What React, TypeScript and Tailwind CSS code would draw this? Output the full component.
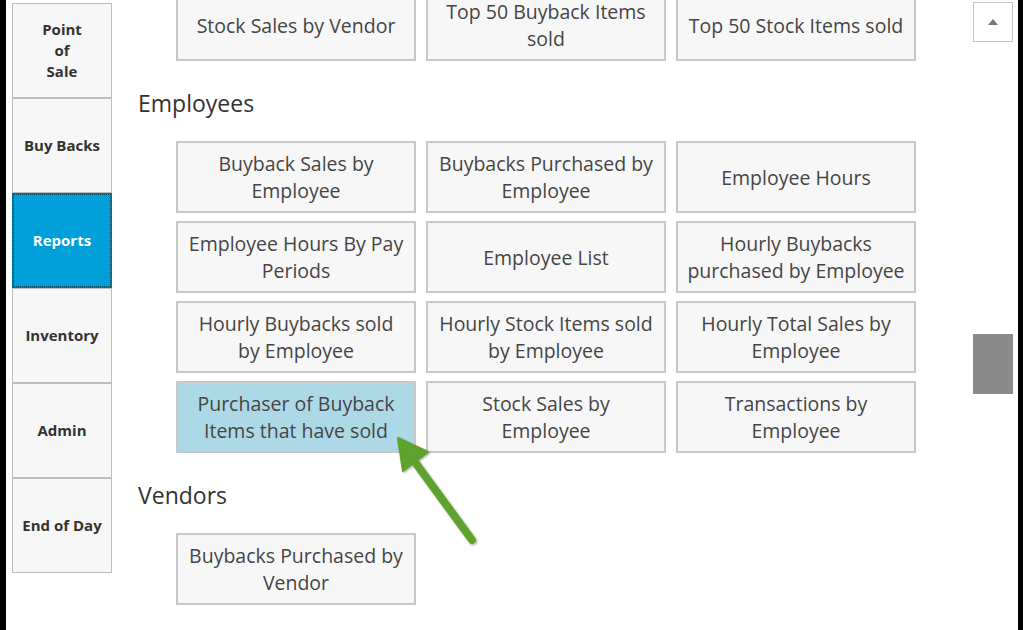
import React from "react";

const navItems = [
  { label: "Point\nof\nSale", active: false },
  { label: "Buy Backs", active: false },
  { label: "Reports", active: true },
  { label: "Inventory", active: false },
  { label: "Admin", active: false },
  { label: "End of Day", active: false },
];

const topRow = ["Stock Sales by Vendor", "Top 50 Buyback Items\nsold", "Top 50 Stock Items sold"];

const employeeReports = [
  "Buyback Sales by\nEmployee",
  "Buybacks Purchased by\nEmployee",
  "Employee Hours",
  "Employee Hours By Pay\nPeriods",
  "Employee List",
  "Hourly Buybacks\npurchased by Employee",
  "Hourly Buybacks sold\nby Employee",
  "Hourly Stock Items sold\nby Employee",
  "Hourly Total Sales by\nEmployee",
  "Purchaser of Buyback\nItems that have sold",
  "Stock Sales by\nEmployee",
  "Transactions by\nEmployee",
];

const vendorReports = ["Buybacks Purchased by\nVendor"];

const ReportButton = ({ label, highlight }: { label: string; highlight?: boolean }) => (
  <button
    className={`h-[72px] w-[240px] border-2 border-[#c8c8c8] px-1 text-[19.5px] leading-[27px] whitespace-pre-line text-[#454545] flex items-center justify-center text-center ${
      highlight ? "bg-[#add8e6]" : "bg-[#f7f7f7]"
    }`}
  >
    {label}
  </button>
);

const ReportGrid = ({ items }: { items: string[] }) => (
  <div className="ml-[38px] grid grid-cols-[240px_240px_240px] gap-x-[10px] gap-y-[8px]">
    {items.map((item) => (
      <ReportButton
        key={item}
        label={item}
        highlight={item.startsWith("Purchaser of Buyback")}
      />
    ))}
  </div>
);

export default function App() {
  return (
    <div
      className="relative flex h-[630px] w-[1023px] overflow-hidden bg-white"
      style={{ fontFamily: '"Open Sans", "Noto Sans", sans-serif' }}
    >
      <div className="w-[6px] shrink-0 bg-black" />

      {/* side nav */}
      <div className="ml-[6px] mt-[3px] flex w-[100px] shrink-0 flex-col">
        {navItems.map((item) => (
          <div
            key={item.label}
            className={`flex h-[95px] items-center justify-center whitespace-pre-line text-center text-[15px] font-bold leading-[21px] ${
              item.active
                ? "border border-[#00719a] bg-[#009fda] text-white outline-1 outline-dotted -outline-offset-2 outline-[#004a66]"
                : "border border-[#bdbdbd] bg-[#f7f7f7] text-[#333]"
            }`}
          >
            {item.label}
          </div>
        ))}
      </div>

      {/* report list */}
      <div className="ml-[26px] -mt-[11px] flex w-[778px] shrink-0 flex-col">
        <div className="ml-[38px] grid grid-cols-[240px_240px_240px] gap-x-[10px]">
          {topRow.map((item) => (
            <ReportButton key={item} label={item} />
          ))}
        </div>

        <h2 className="mt-[27px] mb-[23px] h-[30px] text-[23px] leading-[30px] text-[#333]">Employees</h2>
        <ReportGrid items={employeeReports} />

        <h2 className="mt-[27px] mb-[23px] h-[30px] text-[23px] leading-[30px] text-[#333]">Vendors</h2>
        <ReportGrid items={vendorReports} />
      </div>

      {/* scrollbar */}
      <div className="ml-auto mr-[5px] flex w-[40px] shrink-0 flex-col">
        <div className="mt-[2px] flex h-[40px] items-center justify-center border border-[#c4c4c4] bg-white">
          <div className="h-0 w-0 border-x-[5px] border-b-[6px] border-x-transparent border-b-[#777]" />
        </div>
        <div className="mt-[292px] h-[60px] bg-[#8a8a8a]" />
      </div>

      <div className="w-[5px] shrink-0 bg-black" />

      {/* callout arrow */}
      <svg className="pointer-events-none absolute left-0 top-0" width="1023" height="630">
        <defs>
          <filter id="sh" x="-20%" y="-20%" width="140%" height="140%">
            <feDropShadow dx="1" dy="1" stdDeviation="1.2" floodColor="#000" floodOpacity="0.35" />
          </filter>
        </defs>
        <g filter="url(#sh)">
          <line x1="472" y1="540" x2="412" y2="458" stroke="#5ea22d" strokeWidth="8" strokeLinecap="round" />
          <polygon points="398,438 403,471 428,452" fill="#5ea22d" stroke="#5ea22d" strokeWidth="2" strokeLinejoin="round" />
        </g>
      </svg>
    </div>
  );
}
